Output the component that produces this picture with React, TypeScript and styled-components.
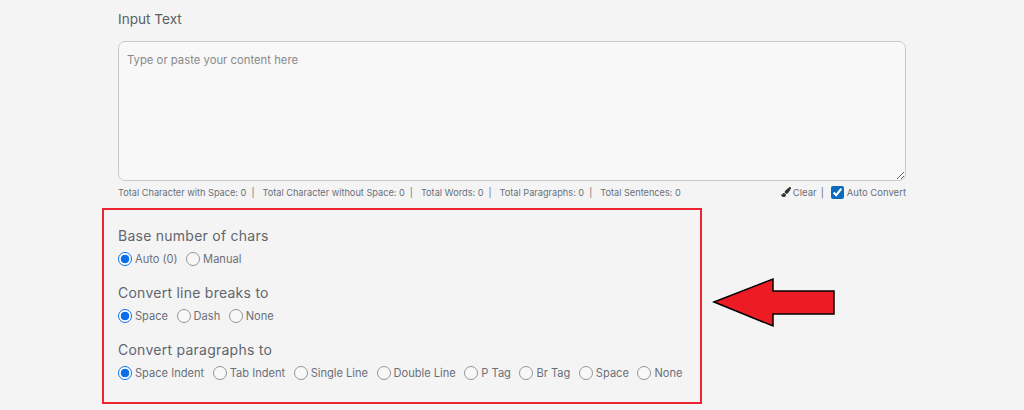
import { createGlobalStyle } from "styled-components";
import styled from "styled-components";
import { FaPaintBrush } from "react-icons/fa";

const Global = createGlobalStyle`
    html, body {
        margin: 0;
        padding: 0;
        background: #f4f4f4;
    }
    body {
        font-family: "Inter", "Liberation Sans", sans-serif;
        color: #5f6670;
    }
`
const Page = styled.div`
    position: relative;
    width: 1024px;
    height: 410px;
    overflow: hidden;
`
const Content = styled.div`
    width: 788px;
    margin-left: 118px;
    padding-top: 10px;
`
const Title = styled.div`
    font-size: 13.6px;
    line-height: 18px;
    color: #5a5f66;
    margin-bottom: 13px;
`
const TextArea = styled.textarea`
    display: block;
    box-sizing: border-box;
    width: 788px;
    height: 140px;
    padding: 10px 8px;
    background: #f8f8f8;
    border: 1px solid #c9c9c9;
    border-radius: 7px;
    font-family: inherit;
    font-size: 11.3px;
    line-height: 16px;
    outline: none;
    &::placeholder {
        color: #8a8a8a;
    }
`
const StatsRow = styled.div`
    display: flex;
    justify-content: space-between;
    align-items: center;
    height: 22px;
    font-size: 9.2px;
    color: #6a7079;
`
const Stats = styled.div`
    display: flex;
`
const Stat = styled.span`
    white-space: pre;
`
const StatSep = styled.span`
    margin: 0 8px 0 5px;
`
const Tools = styled.div`
    display: flex;
    align-items: center;
    font-size: 9.5px;
`
const ToolSep = styled.span`
    margin: 0 7px 0 4px;
`
const Check = styled.input`
    width: 13px;
    height: 13px;
    margin: 0 3px 0 0;
    accent-color: #0b6bbf;
`
const Brush = styled(FaPaintBrush)`
    width: 10px;
    height: 10px;
    color: #333;
    margin-right: 2px;
`
const OptionsBox = styled.div`
    box-sizing: border-box;
    width: 600px;
    height: 196px;
    margin: 5px 0 0 -16px;
    padding: 16px 14px;
    border: 2px solid #ee2430;
`
const Group = styled.div`
    margin-bottom: 14px;
`
const GroupTitle = styled.div`
    font-size: 14px;
    letter-spacing: 0.25px;
    line-height: 20px;
    color: #5f6670;
    margin-bottom: 3px;
`
const Options = styled.div`
    display: flex;
    align-items: center;
    gap: 8.5px;
    height: 20px;
`
const Option = styled.label`
    display: flex;
    align-items: center;
    font-size: 11.1px;
    color: #6a7079;
    white-space: nowrap;
`
const Radio = styled.input`
    appearance: none;
    box-sizing: border-box;
    width: 14px;
    height: 14px;
    margin: 0 3px 0 0;
    border: 1px solid #959595;
    border-radius: 50%;
    background: #f8f8f8;
    &:checked {
        border-color: #0b6ee8;
        background: radial-gradient(circle, #0b6ee8 0 4px, #fff 4.6px);
    }
`
const Arrow = styled.svg`
    position: absolute;
    left: 710px;
    top: 276px;
`

const stats = [
    "Total Character with Space: 0",
    "Total Character without Space: 0",
    "Total Words: 0",
    "Total Paragraphs: 0",
    "Total Sentences: 0",
]

const groups = [
    { title: "Base number of chars", name: "base", options: ["Auto (0)", "Manual"] },
    { title: "Convert line breaks to", name: "breaks", options: ["Space", "Dash", "None"] },
    {
        title: "Convert paragraphs to",
        name: "paragraphs",
        options: ["Space Indent", "Tab Indent", "Single Line", "Double Line", "P Tag", "Br Tag", "Space", "None"],
    },
]

export default function App() {
    return <Page>
        <Global />
        <Content>
            <Title>Input Text</Title>
            <TextArea placeholder="Type or paste your content here" />
            <StatsRow>
                <Stats>
                    {stats.map((s, i) => <Stat key={s}>{s}{i < stats.length - 1 ? <StatSep>|</StatSep> : null}</Stat>)}
                </Stats>
                <Tools>
                    <Brush />
                    <span>Clear</span>
                    <ToolSep>|</ToolSep>
                    <Check type="checkbox" defaultChecked />
                    <span>Auto Convert</span>
                </Tools>
            </StatsRow>
            <OptionsBox>
                {groups.map(g => <Group key={g.name}>
                    <GroupTitle>{g.title}</GroupTitle>
                    <Options>
                        {g.options.map((o, i) => <Option key={o}>
                            <Radio type="radio" name={g.name} defaultChecked={i === 0} />
                            {o}
                        </Option>)}
                    </Options>
                </Group>)}
            </OptionsBox>
        </Content>
        <Arrow width="130" height="54" viewBox="0 0 130 54">
            <path d="M4 26 L63 3 L63 15 L124 15 L124 38 L63 38 L63 50 Z" fill="#ed1c24" stroke="#000" strokeWidth="1.5" />
        </Arrow>
    </Page>
}
